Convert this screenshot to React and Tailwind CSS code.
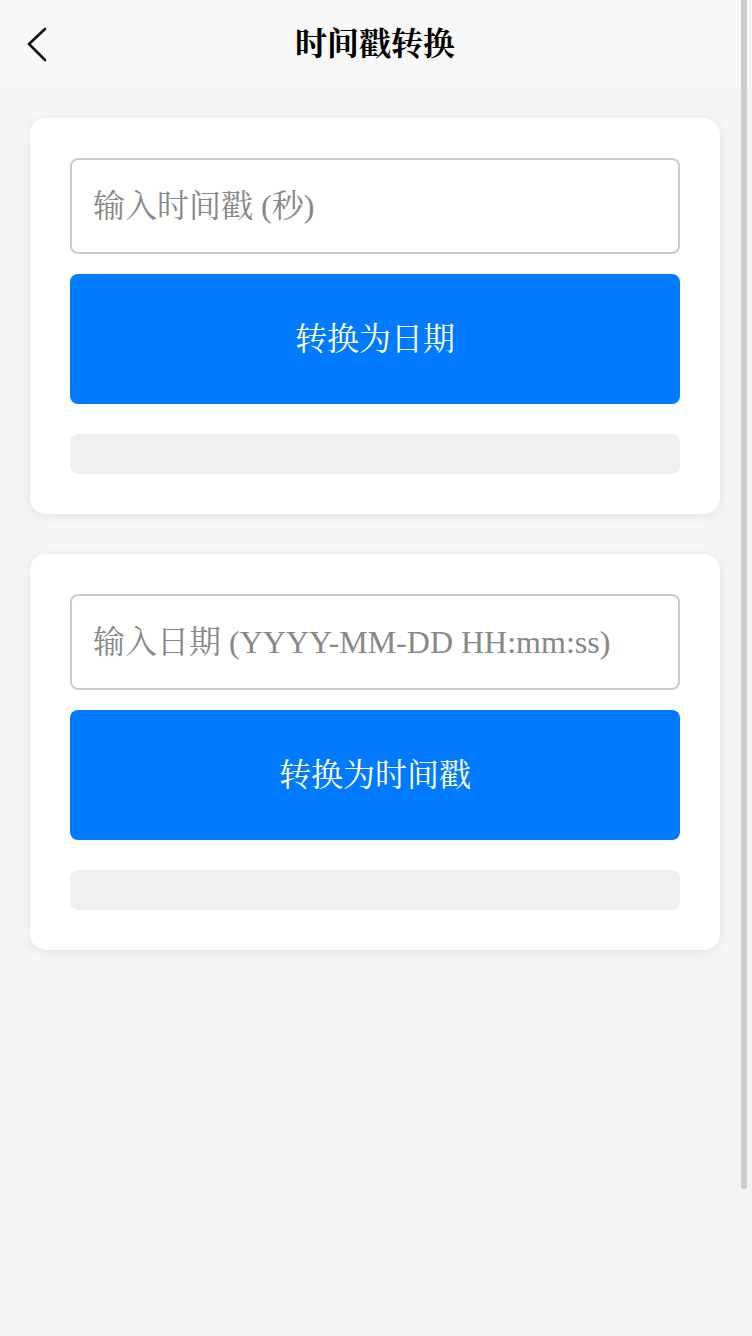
import React, { useState } from 'react';

const pad = (n) => String(n).padStart(2, '0');

const formatDate = (d) =>
  `${d.getFullYear()}-${pad(d.getMonth() + 1)}-${pad(d.getDate())} ${pad(d.getHours())}:${pad(d.getMinutes())}:${pad(d.getSeconds())}`;

const Card = ({ value, onChange, placeholder, buttonText, onConvert, result }) => (
  <div className="bg-white rounded-2xl shadow-[0_2px_10px_rgba(0,0,0,0.08)] p-10 flex flex-col">
    <input
      value={value}
      onChange={(e) => onChange(e.target.value)}
      placeholder={placeholder}
      className="h-[96px] w-full rounded-lg border-2 border-[#cccccc] px-[21px] text-[32px] text-[#333] placeholder:text-[#888888] outline-none bg-white"
    />
    <button
      onClick={onConvert}
      className="mt-5 h-[130px] w-full rounded-lg bg-[#007aff] text-white text-[32px]"
    >
      {buttonText}
    </button>
    <div className="mt-[30px] min-h-[40px] w-full rounded-lg bg-[#f0f0f0] px-5 text-[28px] text-[#333] flex items-center">
      {result}
    </div>
  </div>
);

export default function App() {
  const [ts, setTs] = useState('');
  const [date, setDate] = useState('');
  const [tsResult, setTsResult] = useState('');
  const [dateResult, setDateResult] = useState('');

  const toDate = () => {
    const n = Number(ts);
    if (!ts || Number.isNaN(n)) return setTsResult('');
    setTsResult(formatDate(new Date(n * 1000)));
  };

  const toStamp = () => {
    const d = new Date(date.replace(' ', 'T'));
    if (!date || Number.isNaN(d.getTime())) return setDateResult('');
    setDateResult(String(Math.floor(d.getTime() / 1000)));
  };

  return (
    <div
      className="min-h-[1336px] bg-[#f5f5f5]"
      style={{ fontFamily: '"Liberation Serif", "Noto Serif CJK SC", serif' }}
    >
      <div className="w-[750px]">
        {/* header */}
        <div className="h-[88px] bg-[#f8f8f8] flex items-center justify-center relative">
          <button className="absolute left-[26px] top-[26px] w-[24px] h-[36px]">
            <svg width="24" height="36" viewBox="0 0 24 36" fill="none">
              <path d="M19 3 L3 18 L19 34" stroke="#111" strokeWidth="2.6" strokeLinecap="round" strokeLinejoin="round" />
            </svg>
          </button>
          <h1 className="text-[32px] font-bold text-black">时间戳转换</h1>
        </div>

        <div className="px-[30px] pt-[30px] flex flex-col gap-10">
          <Card
            value={ts}
            onChange={setTs}
            placeholder="输入时间戳 (秒)"
            buttonText="转换为日期"
            onConvert={toDate}
            result={tsResult}
          />
          <Card
            value={date}
            onChange={setDate}
            placeholder="输入日期 (YYYY-MM-DD HH:mm:ss)"
            buttonText="转换为时间戳"
            onConvert={toStamp}
            result={dateResult}
          />
        </div>
      </div>

      {/* overlay scrollbar thumb */}
      <div className="fixed top-0 right-[5px] w-[6px] h-[1189px] bg-[#cdcdcd] rounded-b-full" />
    </div>
  );
}
